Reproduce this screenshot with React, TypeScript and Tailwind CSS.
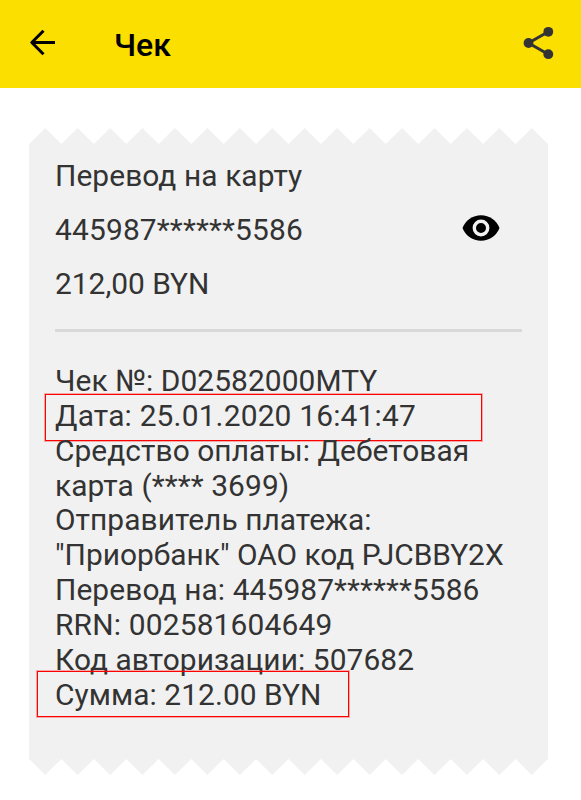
import clsx from "clsx"

const TEETH = 16

const details = [
  { text: "Чек №: D02582000MTY", tracking: "tracking-[0.07px]" },
  {
    text: "Дата: 25.01.2020 16:41:47",
    tracking: "tracking-[0.18px]",
    mark: "left-[-10px] top-[-5px] w-[437px] h-[47px]",
  },
  { text: "Средство оплаты: Дебетовая", tracking: "tracking-[0.06px]" },
  { text: "карта (**** 3699)", tracking: "tracking-[0.1px]" },
  { text: "Отправитель платежа:", tracking: "tracking-[0.05px]" },
  { text: "\"Приорбанк\" ОАО код PJCBBY2X", tracking: "tracking-normal" },
  { text: "Перевод на: 445987******5586", tracking: "tracking-[0.1px]" },
  { text: "RRN: 002581604649", tracking: "tracking-[0.18px]" },
  { text: "Код авторизации: 507682", tracking: "tracking-[0.07px]" },
  {
    text: "Сумма: 212.00 BYN",
    tracking: "tracking-[0.07px]",
    mark: "left-[-18px] top-[-7px] w-[312px] h-[46px]",
  },
]

function ArrowIcon() {
  return (
    <svg className="w-[27px] h-[27px] mb-[3px]" viewBox="0 0 27 27" fill="none" stroke="#000" strokeWidth="3">
      <path d="M26 13.5H3M14.5 1.8L2.8 13.5L14.5 25.2" strokeLinejoin="round" />
    </svg>
  )
}

function ShareIcon() {
  return (
    <svg className="w-[31px] h-[34px]" viewBox="0 0 31 34" fill="#333">
      <path d="M25.3 5.8L5.5 17L25.3 28.2" fill="none" stroke="#333" strokeWidth="3" />
      <circle cx="25.3" cy="5.8" r="4.9" />
      <circle cx="5.5" cy="17" r="4.9" />
      <circle cx="25.3" cy="28.2" r="4.9" />
    </svg>
  )
}

function EyeIcon() {
  return (
    <svg className="w-[38px] h-[26px] mb-[4px]" viewBox="0 0 38 26">
      <path d="M0.5 13C3.5 5.3 10.7 0.3 19 0.3S34.5 5.3 37.5 13C34.5 20.7 27.3 25.7 19 25.7S3.5 20.7 0.5 13Z" />
      <circle cx="19" cy="13" r="6.7" fill="none" stroke="#f1f1f1" strokeWidth="3.4" />
    </svg>
  )
}

function TornEdge({ flip = false }: { flip?: boolean }) {
  let d = "M0 1"
  for (let i = 0; i < TEETH; i++) {
    d += `L${i + 0.5} 0L${i + 1} 1`
  }

  return (
    <svg
      className={clsx("block w-full h-[16px]", flip && "rotate-180")}
      viewBox={`0 0 ${TEETH} 1`}
      preserveAspectRatio="none"
      fill="#f1f1f1"
    >
      <path d={d + "Z"} />
    </svg>
  )
}

function Header() {
  return (
    <header className="flex items-center h-[88px] bg-[#fadf00] pl-[29px] pr-[27px]">
      <ArrowIcon />
      <h1 className="ml-[58px] mt-[2px] text-[32px] leading-none font-medium text-black">Чек</h1>
      <div className="ml-auto mb-[3px]">
        <ShareIcon />
      </div>
    </header>
  )
}

function App() {
  return (
    <div className="w-full h-[800px] overflow-hidden bg-white font-[Roboto,sans-serif] text-[29.9px] text-[#333]">
      <Header />
      <main className="ml-[29px] mr-[33px] pt-[39.5px]">
        <TornEdge />
        <div className="h-[615px] bg-[#f1f1f1] px-[26px] pt-[5px]">
          <div className="leading-[54.3px] whitespace-nowrap">
            <p className="tracking-[0.08px]">Перевод на карту</p>
            <div className="flex items-center justify-between pr-[22px]">
              <p className="tracking-[0.17px]">445987******5586</p>
              <EyeIcon />
            </div>
            <p>212,00 BYN</p>
          </div>
          <div className="mt-[18px] h-[3px] bg-[#d9d9d9]" />
          <ul className="mt-[31.7px] leading-[34.85px] whitespace-nowrap">
            {details.map((line) => (
              <li key={line.text} className={clsx("relative", line.tracking)}>
                {line.text}
                {line.mark && (
                  <span
                    className={clsx(
                      "absolute border border-[#ff0000] shadow-[0_0_0_1px_rgba(255,0,0,0.3)]",
                      line.mark
                    )}
                  />
                )}
              </li>
            ))}
          </ul>
        </div>
        <TornEdge flip />
      </main>
    </div>
  )
}

export default App
